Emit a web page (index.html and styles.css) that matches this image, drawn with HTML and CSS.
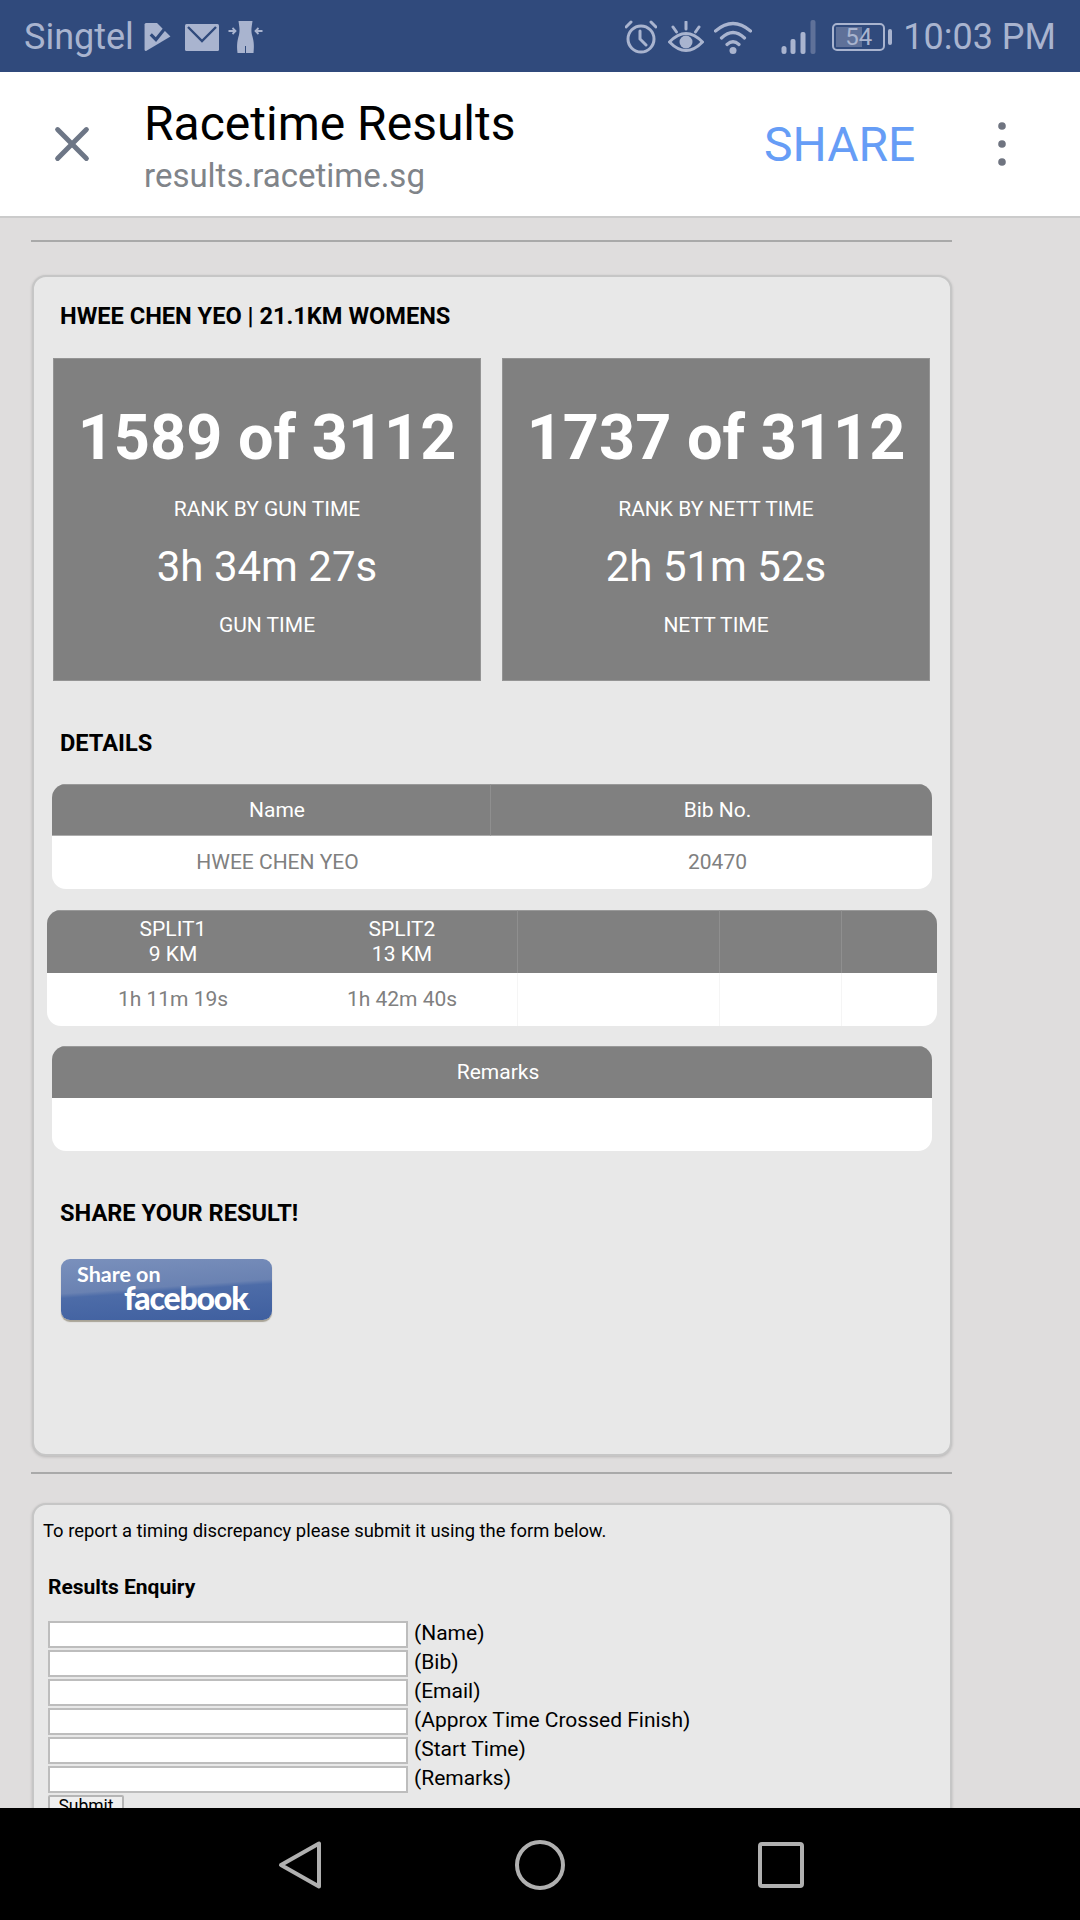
FILE: index.html
```html
<!DOCTYPE html>
<html lang="en">
<head>
<meta charset="utf-8">
<title>Racetime Results</title>
<link rel="stylesheet" href="styles.css">
</head>
<body>
<header class="status">
  <div class="status-left">
    <span class="carrier">Singtel</span>
    <svg class="ic-flag" width="27" height="28" viewBox="0 0 25 27"><path d="M0 1.500Q0 0 1.500 0H12L25 13L1.500 27Q0 27 0 25.500Z" fill="#a9b4cf"/><path d="M6 11L11 16L19 6" fill="none" stroke="#304a7c" stroke-width="3"/></svg>
    <svg class="ic-mail" width="34" height="27" viewBox="0 0 34 27"><rect width="34" height="27" rx="1.500" fill="#a9b4cf"/><path d="M3 3L17 17L31 3" fill="none" stroke="#304a7c" stroke-width="2.400"/></svg>
    <svg class="ic-body" width="35" height="32" viewBox="0 0 34 32"><path d="M10 0H24C23 7 22.500 9 23.500 14C25 19 26 23 25 32H9C8 23 9 19 10.500 14C11.500 9 11 7 10 0Z" fill="#a9b4cf"/><path d="M17 25V32" stroke="#304a7c" stroke-width="1"/><path d="M0 10H6M4 7L7 10L4 13M34 10H28M30 7L27 10L30 13" fill="none" stroke="#a9b4cf" stroke-width="1.800"/></svg>
  </div>
  <div class="status-right">
    <svg class="ic-alarm" width="32" height="34" viewBox="0 0 32 34"><circle cx="16" cy="19" r="13" fill="none" stroke="#a9b4cf" stroke-width="3"/><path d="M15 11V19L21 25M1 7L6 2M31 7L26 2" fill="none" stroke="#a9b4cf" stroke-width="3" stroke-linecap="round"/></svg>
    <svg class="ic-eye" width="36" height="33" viewBox="0 0 36 33"><path d="M1.500 21Q18 4 34.500 21Q18 38 1.500 21Z" fill="none" stroke="#a9b4cf" stroke-width="3"/><circle cx="18" cy="21" r="6.500" fill="#a9b4cf"/><path d="M18 1V8M5 6L8.500 11M31 6L27.500 11" stroke="#a9b4cf" stroke-width="3" stroke-linecap="round"/></svg>
    <svg class="ic-wifi" width="38" height="33" viewBox="0 0 38 33"><path d="M1.500 10Q19 -5 36.500 10M7.500 17Q19 6 30.500 17M13 23.500Q19 18 25 23.500" fill="none" stroke="#a9b4cf" stroke-width="3.200" stroke-linecap="round"/><circle cx="19" cy="29.500" r="3.500" fill="#a9b4cf"/></svg>
    <svg class="ic-signal" width="35" height="34" viewBox="0 0 34 34"><g fill="#a9b4cf"><rect x="0" y="26" width="5" height="8" rx="2.500"/><rect x="9" y="19" width="5" height="15" rx="2"/><rect x="19" y="12" width="5" height="22" rx="2"/></g><rect x="29" y="0" width="5" height="34" rx="2" fill="#5f7199"/></svg>
    <div class="battery">
      <div class="battery-body"><span class="battery-level"></span><span class="battery-text">54</span></div>
      <span class="battery-nub"></span>
    </div>
    <span class="clock">10:03 PM</span>
  </div>
</header>

<nav class="topbar">
  <svg class="close" width="40" height="40" viewBox="0 0 40 40"><path d="M4 4L36 36M36 4L4 36" fill="none" stroke="#6d7686" stroke-width="5.500" stroke-linecap="round"/></svg>
  <div class="page-title">
    <div class="title">Racetime Results</div>
    <div class="url">results.racetime.sg</div>
  </div>
  <span class="share-action">SHARE</span>
  <svg class="kebab" width="8" height="44" viewBox="0 0 8 44"><circle cx="4" cy="4" r="3.800"/><circle cx="4" cy="22" r="3.800"/><circle cx="4" cy="40" r="3.800"/></svg>
</nav>

<main class="viewport">
  <div class="page">
    <hr class="rule rule-top">
    <section class="card result-card">
      <h2 class="heading heading-name">HWEE CHEN YEO | 21.1KM WOMENS</h2>
      <div class="boxes">
        <div class="box">
          <div class="rank">1589 of 3112</div>
          <div class="label label-rank">RANK BY GUN TIME</div>
          <div class="time">3h 34m 27s</div>
          <div class="label label-time">GUN TIME</div>
        </div>
        <div class="box">
          <div class="rank">1737 of 3112</div>
          <div class="label label-rank">RANK BY NETT TIME</div>
          <div class="time">2h 51m 52s</div>
          <div class="label label-time">NETT TIME</div>
        </div>
      </div>
      <h2 class="heading heading-details">DETAILS</h2>
      <table class="data data-details">
        <thead><tr><th class="col-name">Name</th><th>Bib No.</th></tr></thead>
        <tbody><tr><td class="col-name">HWEE CHEN YEO</td><td>20470</td></tr></tbody>
      </table>
      <table class="data data-splits">
        <thead><tr><th class="s1">SPLIT1<br>9 KM</th><th class="s2">SPLIT2<br>13 KM</th><th class="s3"></th><th class="s4"></th><th class="s5"></th></tr></thead>
        <tbody><tr><td class="s1">1h 11m 19s</td><td class="s2">1h 42m 40s</td><td class="s3"></td><td class="s4"></td><td class="s5"></td></tr></tbody>
      </table>
      <table class="data data-remarks">
        <thead><tr><th>Remarks</th></tr></thead>
        <tbody><tr><td></td></tr></tbody>
      </table>
      <h2 class="heading heading-share">SHARE YOUR RESULT!</h2>
      <a class="fb-button"><span class="fb-share">Share on</span><span class="fb-name">facebook<i class="fb-dot">.</i></span></a>
    </section>
    <hr class="rule rule-mid">
    <section class="card form-card">
      <p class="intro">To report a timing discrepancy please submit it using the form below.</p>
      <h3 class="form-title">Results Enquiry</h3>
      <form class="form">
        <label class="row"><input type="text" class="field"><span>(Name)</span></label>
        <label class="row"><input type="text" class="field"><span>(Bib)</span></label>
        <label class="row"><input type="text" class="field"><span>(Email)</span></label>
        <label class="row"><input type="text" class="field"><span>(Approx Time Crossed Finish)</span></label>
        <label class="row"><input type="text" class="field"><span>(Start Time)</span></label>
        <label class="row"><input type="text" class="field"><span>(Remarks)</span></label>
        <button type="button" class="submit">Submit</button>
      </form>
    </section>
  </div>
</main>

<footer class="navbar">
  <svg width="44" height="50" viewBox="0 0 44 50"><path d="M41 3.500V46.500L3 25Z" fill="none" stroke="#b0b0b0" stroke-width="4" stroke-linejoin="round"/></svg>
  <svg width="50" height="50" viewBox="0 0 50 50"><circle cx="25" cy="25" r="23" fill="none" stroke="#b0b0b0" stroke-width="4"/></svg>
  <svg width="46" height="46" viewBox="0 0 46 46"><rect x="2" y="2" width="42" height="42" rx="2" fill="none" stroke="#b0b0b0" stroke-width="4"/></svg>
</footer>
</body>
</html>
```
FILE: styles.css
```css
* { box-sizing: border-box; }
html, body { margin: 0; padding: 0; }
body {
  width: 1080px;
  height: 1920px;
  display: flex;
  flex-direction: column;
  overflow: hidden;
  font-family: Roboto, "Liberation Sans", sans-serif;
  background: #dfdddd;
}

/* status bar */
.status {
  height: 72px;
  flex: none;
  background: #304a7c;
  color: #a9b4cf;
  display: flex;
  justify-content: space-between;
  align-items: center;
  padding: 2px 24px 0 24px;
}
.status-left, .status-right { display: flex; align-items: center; }
.carrier { font-size: 36px; line-height: 40px; width: 120px; }
.ic-mail { margin-left: 14px; }
.ic-body { margin-left: 9px; }
.status-right svg.ic-eye { margin-left: 11px; }
.status-right svg.ic-wifi { margin-left: 10px; }
.status-right svg.ic-signal { margin-left: 29px; }
.battery { display: flex; align-items: center; margin-left: 16px; }
.battery-body {
  position: relative;
  width: 53px;
  height: 28px;
  border: 2px solid #a9b4cf;
  border-radius: 5px;
  display: flex;
  align-items: center;
  justify-content: center;
  font-size: 24px;
}
.battery-level { position: absolute; left: 2px; top: 2px; bottom: 2px; width: 26px; background: #5f7199; }
.battery-text { position: relative; }
.battery-nub { width: 4px; height: 16px; margin-left: 3px; background: #a9b4cf; border-radius: 2px; }
.clock { font-size: 36px; line-height: 40px; margin-left: 11px; }

/* top bar */
.topbar {
  height: 146px;
  flex: none;
  background: #fff;
  border-bottom: 2px solid #cbcbcb;
  display: flex;
  align-items: center;
  padding-left: 54px;
}
.close { width: 36px; height: 36px; flex: none; margin-top: -1px; }
.page-title { width: 620px; margin-left: 54px; padding-top: 6px; }
.title { font-size: 48px; line-height: 54px; margin-top: -1px; color: #000; }
.url { font-size: 33px; line-height: 40px; margin-top: 5px; color: #808489; }
.share-action { width: 234px; margin-top: 2px; font-size: 48px; line-height: 54px; color: #669df6; }
.kebab { fill: #6f7480; flex: none; }

/* page */
.viewport { flex: 1; min-height: 0; overflow: hidden; }
.page { width: 921px; margin-left: 31px; }
.rule { margin: 0; border: 0; height: 2px; background: #a9a9a9; }
.rule-top { margin-top: 22px; margin-bottom: 33px; }
.rule-mid { margin-top: 16px; margin-bottom: 29px; }
.card {
  margin-left: 1px;
  background: #e8e8e8;
  border: 2px solid #c6c6c6;
  border-radius: 14px;
  box-shadow: 0 1px 3px rgba(0, 0, 0, .18);
}
.result-card { height: 1181px; }
.heading { margin: 0 0 0 26px; font-size: 23.600px; line-height: 28px; font-weight: 700; color: #000; }
.heading-name { margin-top: 25px; }
.heading-details { margin-top: 48px; }
.heading-share { margin-top: 48px; }

.boxes { display: flex; gap: 21px; margin: 28px 0 0 19px; }
.box {
  width: 428px;
  height: 323px;
  padding-top: 41px;
  background: #808080;
  border: 1px solid #949494;
  color: #fff;
  text-align: center;
}
.rank { font-size: 63px; line-height: 76px; font-weight: 700; }
.label { font-size: 21px; line-height: 28px; }
.label-rank { margin-top: 19px; }
.time { margin-top: 19px; font-size: 42px; line-height: 50px; }
.label-time { margin-top: 19px; }

/* tables */
.data {
  border-collapse: separate;
  border-spacing: 0;
  table-layout: fixed;
  border-radius: 14px;
  overflow: hidden;
  font-size: 21px;
  text-align: center;
}
.data th { background: #808080; color: #fff; font-weight: 400; padding: 0; line-height: 25px; border-top: 1px solid #999; }
.data td { background: #fff; color: #808080; padding: 0; line-height: 25px; }
.data-details, .data-remarks { width: 880px; margin-left: 18px; }
.data-details th, .data-remarks th { height: 52px; padding-left: 12px; }
.data-details td, .data-remarks td { height: 53px; padding-left: 12px; }
.data-details th { border-bottom: 1px solid #adadad; }
.data-details { margin-top: 27px; }
.data-details .col-name { width: 439px; }
.data-details th.col-name { border-right: 1px solid #8f8f8f; }
.data-splits { width: 890px; margin: 21px 0 0 13px; }
.data-splits th { height: 63px; }
.data-splits td { height: 53px; }
.s1 { width: 252px; }
.data .s2 { width: 219px; padding-right: 12px; border-right: 1px solid #8f8f8f; }
.s3 { width: 202px; border-right: 1px solid #8f8f8f; }
.s4 { width: 122px; border-right: 1px solid #8f8f8f; }
.data-splits td.s2, .data-splits td.s3, .data-splits td.s4 { border-right-color: #f5f5f5; }
.data-remarks { margin-top: 20px; }

/* facebook button */
.fb-button {
  display: flex;
  flex-direction: column;
  width: 211px;
  height: 61px;
  margin: 32px 0 0 27px;
  padding: 5px 0 0 16px;
  border-radius: 9px;
  color: #fff;
  background: linear-gradient(176deg, #7a90bc 0%, #6a82b2 46%, #4d6ca8 52%, #3f5f9f 100%);
  box-shadow: 0 2px 1px rgba(90, 80, 50, .45);
  font-family: Lato, sans-serif;
  font-weight: 700;
}
.fb-share { font-size: 21.500px; line-height: 20px; }
.fb-name { font-size: 32px; line-height: 28px; margin-left: 47px; font-weight: 900; letter-spacing: -1.200px; }
.fb-dot { font-size: 12px; font-style: normal; font-weight: 400; letter-spacing: 0; }

/* form */
.form-card { height: 400px; padding-left: 9px; color: #000; }
.intro { margin: 14px 0 0; font-size: 18.400px; line-height: 24px; }
.form-title { margin: 31px 0 0 5px; font-size: 21px; line-height: 26px; font-weight: 700; }
.form { margin: 20px 0 0 5px; display: flex; flex-direction: column; align-items: flex-start; }
.row { display: flex; align-items: center; height: 29px; font-size: 21px; }
.row span { padding-bottom: 3px; }
.field {
  width: 360px;
  height: 27px;
  margin: 0 6px 0 0;
  padding: 0;
  background: #fff;
  border: 2px solid #bdbdbd;
  border-radius: 0;
}
.submit {
  width: 76px;
  height: 24px;
  margin-top: 1px;
  padding: 0 0 3px;
  background: #efefef;
  border: 2px solid #b5b5b5;
  border-radius: 2px;
  font: 17.500px/18px Roboto, sans-serif;
  color: #000;
}

/* nav bar */
.navbar {
  height: 112px;
  flex: none;
  background: #000;
  display: flex;
  align-items: center;
}
.navbar svg { flex: none; margin-top: 1px; }
.navbar svg:nth-child(1) { margin-left: 278px; }
.navbar svg:nth-child(2) { margin-left: 193px; }
.navbar svg:nth-child(3) { margin-left: 193px; }
```
